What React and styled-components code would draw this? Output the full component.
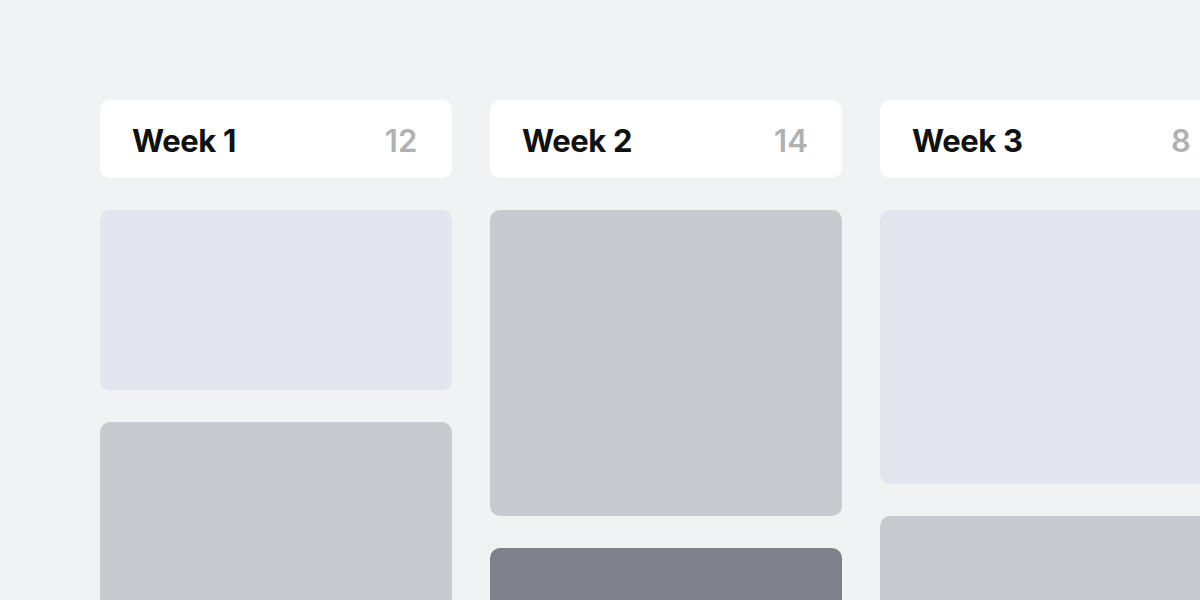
import React from "react";
import styled, { createGlobalStyle } from "styled-components";

const Global = createGlobalStyle`
  html, body { margin: 0; padding: 0; background: #f1f2f4; }
  body { font-family: Inter, "Noto Sans", sans-serif; overflow: hidden; }
`;

const Board = styled.div`
  display: flex;
  gap: 38px;
  padding: 100px 0 0 100px;
  width: 1200px;
  height: 600px;
  box-sizing: border-box;
  overflow: hidden;
`;

const Column = styled.section`
  flex: 0 0 352px;
  display: flex;
  flex-direction: column;
  gap: 32px;
`;

const Header = styled.header`
  flex: 0 0 78px;
  background: #ffffff;
  border-radius: 10px;
  display: flex;
  align-items: center;
  justify-content: space-between;
  padding: 3px 31px 0 32px;
  box-sizing: border-box;
`;

const Title = styled.h2`
  margin: 0;
  font-size: 31px;
  font-weight: 650;
  letter-spacing: -0.4px;
  color: #111111;
`;

const Count = styled.span`
  width: 40px;
  text-align: center;
  font-size: 31px;
  font-weight: 600;
  color: #b1b1b3;
`;

const tones = {
  light: "#e2e5ed",
  mid: "#c9cacf",
  dark: "#80808a",
};

const Card = styled.div`
  flex: 0 0 ${(p) => p.$h}px;
  background: ${(p) => tones[p.$tone]};
  border-radius: 10px;
`;

const columns = [
  { title: "Week 1", count: 12, cards: [{ h: 180, tone: "light" }, { h: 240, tone: "mid" }] },
  { title: "Week 2", count: 14, cards: [{ h: 306, tone: "mid" }, { h: 200, tone: "dark" }] },
  { title: "Week 3", count: 8, cards: [{ h: 274, tone: "light" }, { h: 200, tone: "mid" }] },
];

export default function App() {
  return (
    <>
      <Global />
      <Board>
        {columns.map((c) => (
          <Column key={c.title}>
            <Header>
              <Title>{c.title}</Title>
              <Count>{c.count}</Count>
            </Header>
            {c.cards.map((card, i) => (
              <Card key={i} $h={card.h} $tone={card.tone} />
            ))}
          </Column>
        ))}
      </Board>
    </>
  );
}
